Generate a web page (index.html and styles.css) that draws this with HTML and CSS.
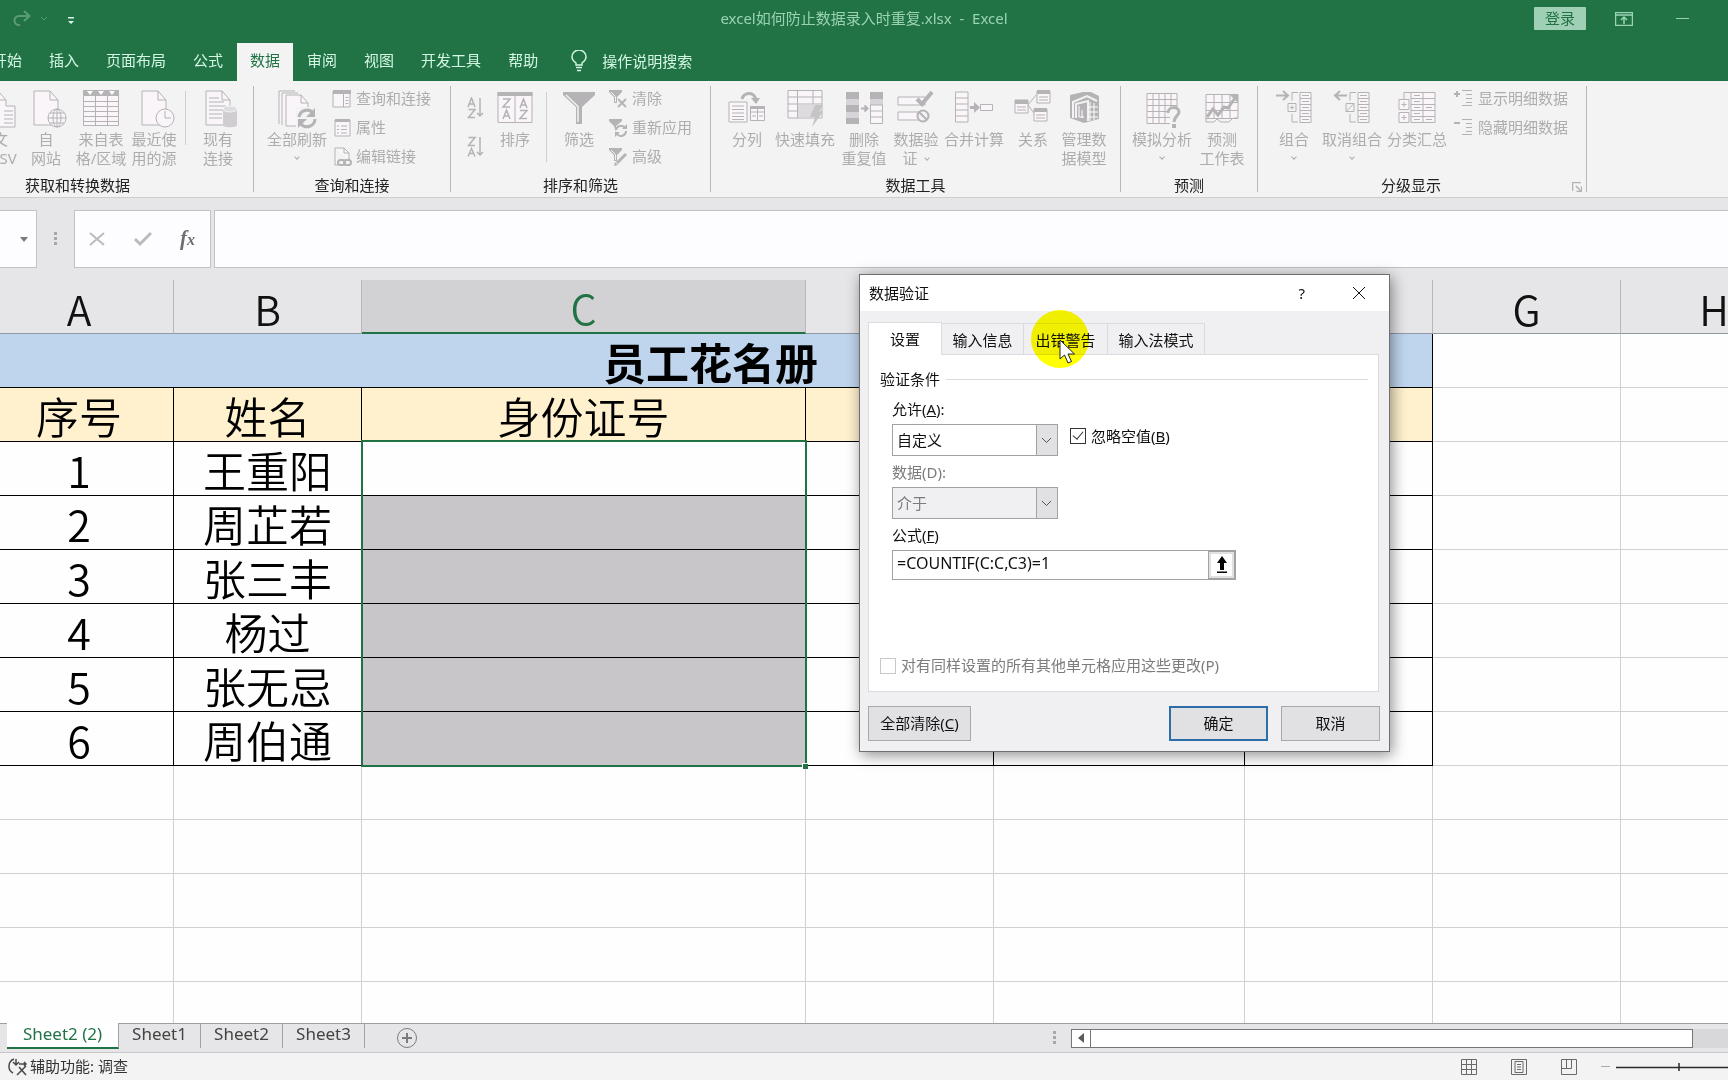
FILE: index.html
```html
<!DOCTYPE html>
<html lang="zh-CN">
<head>
<meta charset="utf-8">
<title>excel如何防止数据录入时重复.xlsx - Excel</title>
<link rel="stylesheet" href="styles.css">
</head>
<body>
<div class="app">
  <header class="titlebar">
    <div class="quick">
      <button class="icon-btn" aria-label="恢复"><svg width="20" height="18" viewBox="0 0 20 18" fill="none" stroke="#5b9c76" stroke-width="2"><path d="M17 6H7a4.500 4.500 0 0 0 0 9h1M12 1l5.500 5L12 11"/></svg></button>
      <button class="icon-btn" aria-label="恢复选项"><svg width="8" height="6" viewBox="0 0 8 6" fill="none" stroke="#5b9c76"><path d="M1 1l3 3 3-3"/></svg></button>
      <button class="icon-btn last" aria-label="自定义快速访问工具栏"><svg width="8" height="8" viewBox="0 0 8 8"><path d="M1 0h6v1.500H1zM1 4h6L4 7z" fill="#d9f5e4"/></svg></button>
    </div>
    <h1 class="doc-name">excel如何防止数据录入时重复.xlsx&nbsp; -&nbsp; Excel</h1>
    <div class="window-tools">
      <button class="login">登录</button>
      <button class="icon-btn" aria-label="功能区显示选项"><svg width="18" height="14" viewBox="0 0 18 14" fill="none" stroke="#9bd3b2"><path d="M.5.5h17v13H.5zM.5 3h17M9 12V5M6 8l3-3 3 3" stroke-width="1.500"/></svg></button>
      <button class="icon-btn" aria-label="最小化"><svg width="14" height="14" viewBox="0 0 14 14" stroke="#9bd3b2"><path d="M0 6.500h13"/></svg></button>
    </div>
  </header>

  <nav class="tabs">
    <button>开始</button><button>插入</button><button>页面布局</button><button>公式</button><button class="active">数据</button><button>审阅</button><button>视图</button><button>开发工具</button><button>帮助</button>
    <button class="tell"><svg width="16" height="22" viewBox="0 0 16 22" fill="none" stroke="#d3f7e2" stroke-width="1.500"><path d="M5 15v-2C3 11.500 1 10 1 7a7 7 0 0 1 14 0c0 3-2 4.500-4 6v2zM5 17.500h6M6 20.500h4"/></svg>操作说明搜索</button>
  </nav>

  <div class="ribbon">
    <section class="group first">
      <div class="tools">
        <button class="big w46"><svg viewBox="0 0 40 40" class="ico"><path class="p" d="M14 2h12l7 8v6h9v21H14z"/><path d="M26 2v8h7M31 21h9M31 25h9M31 29h9M31 33h9"/></svg><span>从文<br>本/CSV</span></button>
        <button class="big w60"><svg viewBox="0 0 40 40" class="ico"><path class="p" d="M8 1h16l8 9v25H8z"/><path d="M24 1v9h8"/><circle class="p" cx="31" cy="28" r="9"/><ellipse cx="31" cy="28" rx="4" ry="9"/><path d="M31 19v18M22 28h18M24 23h14M24 33h14"/></svg><span>自<br>网站</span></button>
        <button class="big w50"><svg viewBox="0 0 40 40" class="ico"><path class="p" d="M2.500 1.500h35v34h-35z"/><path d="M2 11.500h36M2 16.500h36M2 21.500h36M2 26.500h36M2 31.500h36M14.500 6v30M26.500 6v30"/><path class="f" d="M2 0h36v6H2z"/><path fill="#fff" stroke="none" d="M6 1h6l-3 4zM17 1h6l-3 4zM28 1h6l-3 4z"/></svg><span>来自表<br>格/区域</span></button>
        <button class="big w56"><svg viewBox="0 0 40 40" class="ico"><path class="p" d="M8 1h16l8 9v25H8z"/><path d="M24 1v9h8"/><circle class="p" cx="31" cy="28" r="9"/><path d="M31 21v7h6"/></svg><span>最近使<br>用的源</span></button>
        <i class="sep short"></i>
        <button class="big w58"><svg viewBox="0 0 40 40" class="ico"><path class="p" d="M8 1h16l8 9v25H8z"/><path d="M24 1v9h8M11 8h10M11 12h15M11 16h17M11 20h15M11 24h13M11 28h13"/><path d="M25 19v16c0 3 14 3 14 0V19z" fill="#cfcdd0" stroke="none"/><ellipse cx="32" cy="19" rx="7" ry="3" fill="#dedce0" stroke="#f3f3f3"/></svg><span>现有<br>连接</span></button>
      </div>
      <h2>获取和转换数据</h2>
    </section>

    <section class="group g2">
      <div class="tools">
        <button class="big w70"><svg viewBox="0 0 40 40" class="ico"><path class="p" d="M2 34V1h16M5 35V3h16M9 5h15l7 8v23H9z"/><path d="M24 5v8h7"/><path d="M19 17h22v22H19z" fill="#f3f3f3" stroke="none"/><g stroke-width="3"><path d="M22 27a8 8 0 0 1 14-4M38 29a8 8 0 0 1-14 5"/></g><path class="f" d="M38 18v9h-9zM21 38v-9h9z"/></svg><span>全部刷新</span><i class="chev"></i></button>
        <div class="list">
          <button><svg viewBox="0 0 20 20" class="sm"><path class="p" d="M1 2h17v16H1z"/><path class="f" d="M1 1h18v4H1z"/><path d="M11.500 5v13M13.500 8.500h3M13.500 11.500h3M13.500 14.500h3"/></svg>查询和连接</button>
          <button><svg viewBox="0 0 20 20" class="sm"><path class="p" d="M3 2h15v16H3z"/><path class="f" d="M3 1h15v3H3z"/><path d="M5 8h2M9 8h6M5 11.500h2M9 11.500h6M5 15h2M9 15h6"/></svg>属性</button>
          <button><svg viewBox="0 0 20 20" class="sm"><path class="p" d="M3 1h9l5 5v8M3 1v17h3"/><path d="M12 1v5h5"/><g stroke-width="2"><rect x="6" y="13" width="7" height="5" rx="2.500"/><rect x="12" y="13" width="7" height="5" rx="2.500"/></g></svg>编辑链接</button>
        </div>
      </div>
      <h2>查询和连接</h2>
    </section>

    <section class="group g3">
      <div class="tools">
        <div class="sorts">
          <button aria-label="升序"><svg viewBox="0 0 20 22" width="20" height="22" class="line"><path d="M3 10l3.500-9L10 10M4.500 7h4M3.500 12.500H10L3.500 20.500H10M15 1v18M12 16l3 3 3-3"/></svg></button>
          <button aria-label="降序"><svg viewBox="0 0 20 22" width="20" height="22" class="line"><path d="M3.500 1.500H10l-6.500 8H10M3 20.500l3.500-8 3.500 8M4.500 17.500h4M15 1v18M12 16l3 3 3-3"/></svg></button>
        </div>
        <button class="big w56"><svg viewBox="0 0 40 40" class="ico"><path class="p" d="M3 3h34v29.500H3zM20 6v26"/><path class="f" d="M2.500 2h35v4h-35z"/><path stroke-width="1.500" d="M8 9h7l-7 8h7M8 29l3.500-9 3.500 9M9.500 26h4M25 18l3.500-9 3.500 9M26.500 15h4M25 20.500h7l-7 8h7"/></svg><span>排序</span></button>
        <i class="sep"></i>
        <button class="big w58"><svg viewBox="0 0 40 40" class="ico"><path class="f" d="M4 2h32v3L23 17v17h-6V17L4 5z"/><path stroke="#f3f3f3" stroke-width="1.500" d="M7 5l12 11.500V32"/></svg><span>筛选</span></button>
        <div class="list">
          <button><svg viewBox="0 0 20 20" class="sm"><path class="f" d="M1 1h13v2L9 8v6H6V8L1 3z"/><path stroke="#f3f3f3" d="M3 3l4.500 4.500V13"/><path stroke-width="2" d="M10 10l8 8M18 10l-8 8"/></svg>清除</button>
          <button><svg viewBox="0 0 20 20" class="sm"><path class="f" d="M1 1h13v2L8 8v6L6 8 1 3z"/><path stroke-width="2" d="M8 12a5 5 0 0 1 9-2M18 13a5 5 0 0 1-9 3"/><path class="f" d="M19 6v5h-5zM7 19v-5h5z"/></svg>重新应用</button>
          <button><svg viewBox="0 0 20 20" class="sm"><path class="f" d="M1 1h13v2L9 8v6H6V8L1 3z"/><path stroke="#f3f3f3" d="M3 3l4.500 4.500V13"/><path stroke-width="3" d="M18 7l-9 9"/><path class="f" d="M6 19l1-4 3 3z"/></svg>高级</button>
        </div>
      </div>
      <h2>排序和筛选</h2>
    </section>

    <section class="group g4">
      <div class="tools">
        <button class="big w56"><svg viewBox="0 0 40 40" class="ico"><path class="p" d="M2 12h18v20H2zM23.500 17h14v13.500h-14z"/><path d="M5 16h12M5 19.500h12M5 23h12M5 26.500h12M5 29.500h12M30.500 18v12M23 22h14M25 26h4M32 26h4"/><path class="f" d="M23 16h15v3H23z"/><path stroke-width="3" d="M15 9c2-7 12-8 14 1"/><path class="f" d="M24 8h9l-4 6z"/></svg><span>分列</span></button>
        <button class="big w60"><svg viewBox="0 0 40 40" class="ico"><path class="p" d="M3 .5h34v27.500H3z"/><path d="M3 7h34M3 14h34M3 21h34M12.500 0v28M28 0v14"/><path fill="#dddbde" stroke="none" d="M13 15h17v12H13z"/><path fill="#c6c4c7" stroke="none" d="M30 15h8l-4 7h4L27 37l3-10h-5z"/></svg><span>快速填充</span></button>
        <button class="big w58"><svg viewBox="0 0 40 40" class="ico"><path class="p" d="M26.500 3h12v30.500h-12z"/><path class="f" d="M2 2h13v32H2zM26 2h13v7H26z"/><path stroke="none" fill="#d6d4d8" d="M2 9h13v6H2zM2 22h13v6H2zM26 9h13v6H26z"/><path d="M26 15h13M26 21h13M26 27h13"/><path d="M17 18.500h6M20.500 15.500l3 3-3 3" stroke-width="2"/></svg><span>删除<br>重复值</span></button>
        <button class="big w46"><svg viewBox="0 0 40 40" class="ico"><path class="p" d="M2 7h27v8H2zM2 22h27v8H2z"/><path stroke-width="4" d="M21 9l5 5L36 2"/><circle cx="27" cy="26" r="5.500" fill="#f3f3f3" stroke-width="2"/><path stroke-width="2" d="M23 22l8 8"/></svg><span>数据验<br>证 <i class="chev in"></i></span></button>
        <button class="big w70"><svg viewBox="0 0 40 40" class="ico"><path class="p" d="M1.500 2h12.500v30H1.500zM26.500 14.500h12v6h-12z"/><path d="M1 8h13M1 14h13M1 20h13M1 26h13"/><path stroke-width="3" d="M16 17.500h6"/><path class="f" d="M20 12l6 5.500-6 5.500z"/></svg><span>合并计算</span></button>
        <button class="big w48"><svg viewBox="0 0 40 40" class="ico"><path d="M15 15l8-10M15 15l8 11"/><path class="p" d="M2 10h13v13H2zM24 1h13v12H24zM21 19h13v12H21z"/><path class="f" d="M2 10h13v4H2zM24 0h13v4H24zM21 18h13v4H21z"/><path d="M4 17h9M4 20h9M26 7h9M26 10h9M23 25h9M23 28h9"/></svg><span>关系</span></button>
        <button class="big w54"><svg viewBox="0 0 40 40" class="ico"><path class="f" d="M6 5l13-3h8l8 4v23l-15 4-14-5z"/><path stroke="#f3f3f3" fill="none" stroke-width="2" d="M9 28V12l14-6 10 5M12 28V14l12-3v20"/><path stroke="#fff" d="M26 12v19M30 13v17M24 17h10M24 22h10M24 27h10M15 16v11M18 20v8M15 27h5"/></svg><span>管理数<br>据模型</span></button>
      </div>
      <h2>数据工具</h2>
    </section>

    <section class="group g5">
      <div class="tools">
        <button class="big w66"><svg viewBox="0 0 40 40" class="ico"><path class="p" d="M5 3.500h30v30H5z"/><path d="M11 3v31M17 3v31M23 3v31M29 3v31M5 9.500h30M5 15.500h30M5 21.500h30M5 27.500h30"/><path d="M25 17h14v21H28V27h-3z" fill="#f3f3f3" stroke="none"/><path stroke-width="3" d="M26 23c0-7 11-7 11-1 0 4-5 4-5 10"/><path class="f" d="M30 34h4v4h-4z"/></svg><span>模拟分析</span><i class="chev"></i></button>
        <button class="big w54"><svg viewBox="0 0 40 40" class="ico"><path class="p" d="M4 4.500h32v24H4z"/><path d="M12 4v24M20 4v24M28 4v24M4 12.500h32M4 20.500h32M4 28v4h8l3-3 4 3h8l3-3M36 28h-4"/><path stroke-width="3" d="M5 27l6-8 5 6 6-8 4 1 7-10"/><path class="f" d="M28 5h8v8z"/></svg><span>预测<br>工作表</span></button>
      </div>
      <h2>预测</h2>
    </section>

    <section class="group g6">
      <div class="tools">
        <button class="big w56"><svg viewBox="0 0 40 40" class="ico"><path class="p" d="M26 2.500h11v30H26z"/><path d="M26 8.500h11M26 14.500h11M26 20.500h11M26 26.500h11M28 5.500h7M28 11.500h7M28 17.500h7M28 23.500h7M28 29.500h7M24 2.500h-6v8M18 24v8h6M14 13.500h8v8h-8zM16 17.500h4M18 15.500v4"/><path stroke-width="2" d="M2 5.500h12M9 1l5 4.500L9 10"/></svg><span>组合</span><i class="chev"></i></button>
        <button class="big w60"><svg viewBox="0 0 40 40" class="ico"><path class="p" d="M26 2.500h11v30H26z"/><path d="M26 8.500h11M26 14.500h11M26 20.500h11M26 26.500h11M28 5.500h7M28 11.500h7M28 17.500h7M28 23.500h7M28 29.500h7M24 2.500h-6v8M18 24v8h6M14 13.500h8v8h-8zM14 21.500l8-8"/><path stroke-width="2" d="M3 5.500h12M8 1L3 5.500 8 10"/></svg><span>取消组合</span><i class="chev"></i></button>
        <button class="big w70"><svg viewBox="0 0 40 40" class="ico"><path class="p" d="M14 2.500h24v30H14z"/><path d="M14 8.500h24M14 14.500h24M14 20.500h24M14 26.500h24M26 2v31M17 5.500h6M17 11.500h6M17 17.500h6M17 23.500h6M17 29.500h6M29 17.500h6M29 29.500h6M7 9V2.500h7"/><path class="p" d="M2 9.500h10v10H2zM2 22.500h10v10H2z"/><path d="M7 12v5M4.500 14.500h5M7 25v5M4.500 27.500h5"/></svg><span>分类汇总</span></button>
        <div class="list">
          <button><svg viewBox="0 0 20 20" class="sm"><path d="M8 1.500h10M12 5.500h6M12 9.500h6M12 13.500h6M8 16.500h10"/><path stroke-width="2" d="M0 5h6M3 2v6"/></svg>显示明细数据</button>
          <button><svg viewBox="0 0 20 20" class="sm"><path d="M8 1.500h10M12 5.500h6M12 9.500h6M12 13.500h6M8 16.500h10"/><path stroke-width="2" d="M0 5h6"/></svg>隐藏明细数据</button>
        </div>
      </div>
      <h2>分级显示</h2>
      <button class="launcher" aria-label="分级显示设置"><svg width="10" height="10" viewBox="0 0 10 10" class="line"><path d="M.5 9V.5H9M4 4l5 5M9.500 4.500v5h-5"/></svg></button>
    </section>
  </div>

  <div class="formula-bar">
    <button class="name-box" aria-label="名称框"><svg width="8" height="5" viewBox="0 0 8 5"><path d="M0 0h8L4 5z" fill="#7a787a"/></svg></button>
    <svg class="dots" width="4" height="14" viewBox="0 0 4 14" fill="#a8a6a8"><path d="M0 0h3v3H0zM0 5h3v3H0zM0 10h3v3H0z"/></svg>
    <div class="fx-tools">
      <button aria-label="取消"><svg width="16" height="16" viewBox="0 0 16 16" fill="none" stroke="#bcbabc" stroke-width="2"><path d="M1 2l14 12M15 2L1 14"/></svg></button>
      <button aria-label="输入"><svg width="18" height="16" viewBox="0 0 18 16" fill="none" stroke="#bcbabc" stroke-width="3"><path d="M1 8l5 5L17 2"/></svg></button>
      <button class="fx" aria-label="插入函数">f<small>x</small></button>
    </div>
    <input class="formula" aria-label="编辑栏">
  </div>

  <main class="sheet">
    <table>
      <colgroup><col class="ca"><col class="cn"><col class="cc"><col class="cn"><col class="ce"><col class="cn"><col class="cn"><col></colgroup>
      <thead><tr><th class="a">A</th><th>B</th><th class="on">C</th><th></th><th></th><th></th><th>G</th><th>H</th></tr></thead>
      <tbody>
        <tr class="d title"><td colspan="6" class="a">员工花名册</td><td></td><td></td></tr>
        <tr class="d head"><td class="a">序号</td><td>姓名</td><td>身份证号</td><td></td><td></td><td></td><td></td><td></td></tr>
        <tr class="d"><td class="a">1</td><td>王重阳</td><td class="cell-active"></td><td></td><td></td><td></td><td></td><td></td></tr>
        <tr class="d"><td class="a">2</td><td>周芷若</td><td class="sel"></td><td></td><td></td><td></td><td></td><td></td></tr>
        <tr class="d"><td class="a">3</td><td>张三丰</td><td class="sel"></td><td></td><td></td><td></td><td></td><td></td></tr>
        <tr class="d"><td class="a">4</td><td>杨过</td><td class="sel"></td><td></td><td></td><td></td><td></td><td></td></tr>
        <tr class="d"><td class="a">5</td><td>张无忌</td><td class="sel"></td><td></td><td></td><td></td><td></td><td></td></tr>
        <tr class="d"><td class="a">6</td><td>周伯通</td><td class="sel"></td><td></td><td></td><td></td><td></td><td></td></tr>
        <tr><td></td><td></td><td></td><td></td><td></td><td></td><td></td><td></td></tr>
        <tr><td></td><td></td><td></td><td></td><td></td><td></td><td></td><td></td></tr>
        <tr><td></td><td></td><td></td><td></td><td></td><td></td><td></td><td></td></tr>
        <tr><td></td><td></td><td></td><td></td><td></td><td></td><td></td><td></td></tr>
        <tr><td></td><td></td><td></td><td></td><td></td><td></td><td></td><td></td></tr>
      </tbody>
    </table>
  </main>

  <div class="sheet-bar">
    <div class="sheet-tabs">
      <button class="active">Sheet2 (2)</button><button>Sheet1</button><button>Sheet2</button><button>Sheet3</button>
      <button class="add" aria-label="新工作表"><svg width="22" height="22" viewBox="0 0 22 22" fill="none" stroke="#7c7a7c"><circle cx="11" cy="11" r="9.500"/><path stroke-width="2" d="M11 6v10M6 11h10"/></svg></button>
    </div>
    <div class="scroll">
      <svg class="dots" width="4" height="14" viewBox="0 0 4 14" fill="#a8a6a8"><path d="M0 0h3v3H0zM0 5h3v3H0zM0 10h3v3H0z"/></svg>
      <button class="arrow" aria-label="向左滚动"><svg width="6" height="10" viewBox="0 0 6 10"><path d="M6 0v10L0 5z" fill="#5c5a5c"/></svg></button>
      <div class="thumb"></div>
      <div class="rest"></div>
    </div>
  </div>

  <footer class="status">
    <button class="access"><svg width="20" height="18" viewBox="0 0 20 18" fill="none" stroke="#4b494b" stroke-width="1.500"><path d="M6 1C0 3-1 12 5 15M8 1v5M5 4l3 3 3-3M11 6h7M16 4l2 2-2 2M11 9l7 8M18 8l-9 9"/></svg>辅助功能: 调查</button>
    <div class="views">
      <button aria-label="普通"><svg width="16" height="16" viewBox="0 0 16 16" fill="none" stroke="#6b696b"><path d="M.5.5h15v15H.5zM5.500 0v16M10.500 0v16M0 5.500h16M0 10.500h16"/></svg></button>
      <button aria-label="页面布局"><svg width="16" height="16" viewBox="0 0 16 16" fill="none" stroke="#6b696b"><path d="M.5.5h15v15H.5zM4 2.500h8v11H4zM6 5.500h4M6 8h4M6 10.500h4"/></svg></button>
      <button aria-label="分页预览"><svg width="16" height="16" viewBox="0 0 16 16" fill="none" stroke="#6b696b"><path d="M.5.5h15v15H.5zM5.500 0v9.500M10.500 0v9.500H0"/></svg></button>
      <svg class="zoomer" width="127" height="16" viewBox="0 0 127 16" fill="none"><path d="M0 7.500h9" stroke="#aaa8aa"/><path d="M15 8.500h113M78 4v8" stroke="#2b292b" stroke-width="1.500"/></svg>
    </div>
  </footer>

  <div class="dialog" role="dialog" aria-label="数据验证">
    <div class="dlg-title"><span>数据验证</span>
      <button aria-label="帮助">?</button>
      <button aria-label="关闭"><svg width="14" height="14" viewBox="0 0 14 14" stroke="#111"><path d="M1 1l12 12M13 1L1 13"/></svg></button>
    </div>
    <div class="dlg-body">
      <div class="dlg-tabs">
        <button class="active">设置</button><button class="t82">输入信息</button><button class="t84">出错警告</button><button class="t97">输入法模式</button>
      </div>
      <div class="panel">
        <div class="legend">验证条件</div>
        <div class="fields">
          <label for="allow">允许(<u>A</u>):</label>
          <div class="line-row">
            <div class="combo"><select id="allow"><option>自定义</option></select><svg width="11" height="7" viewBox="0 0 11 7" fill="none" stroke="#555"><path d="M1 1l4.500 4.500L10 1"/></svg></div>
            <label class="check"><input type="checkbox" checked><span>忽略空值(<u>B</u>)</span></label>
          </div>
          <label for="data" class="off">数据(D):</label>
          <div class="combo off"><select id="data" disabled><option>介于</option></select><svg width="11" height="7" viewBox="0 0 11 7" fill="none" stroke="#555"><path d="M1 1l4.500 4.500L10 1"/></svg></div>
          <label for="formula">公式(<u>F</u>)</label>
          <div class="ref"><input id="formula" value="=COUNTIF(C:C,C3)=1"><button aria-label="折叠对话框"><svg width="12" height="18" viewBox="0 0 12 18"><path d="M6 0l5 7H8v7H4V7H1zM1 15.500h10V17H1z"/></svg></button></div>
        </div>
        <label class="check off"><input type="checkbox" disabled><span>对有同样设置的所有其他单元格应用这些更改(P)</span></label>
      </div>
      <div class="actions">
        <button class="clear">全部清除(<u>C</u>)</button>
        <button class="ok">确定</button>
        <button>取消</button>
      </div>
    </div>
    <div class="halo"></div>
    <svg class="pointer" width="17" height="26" viewBox="0 0 17 26"><path d="M1 1v19l4.500-4 3.500 8 3.500-1.500L9 15h6.500z" fill="#fff" stroke="#222"/></svg>
  </div>
</div>
</body>
</html>
```
FILE: styles.css
```css
*, *::before, *::after { box-sizing: border-box; }
body {
  margin: 0;
  font: 15px/19px "Noto Sans", "Noto Sans CJK SC", sans-serif;
  color: #111;
}
button {
  font: inherit;
  color: inherit;
  background: none;
  border: 0;
  padding: 0;
  white-space: nowrap;
}
h1, h2 { margin: 0; font-size: 15px; font-weight: 400; }
svg { display: block; flex: none; }

.app {
  position: relative;
  display: flex;
  flex-direction: column;
  height: 100vh;
  overflow: hidden;
  background: #e6e6e8;
}

/* Title bar */
.titlebar {
  display: grid;
  grid-template-columns: 1fr auto 1fr;
  align-items: center;
  height: 43px;
  padding-bottom: 6px;
  background: #217346;
}
.quick { display: flex; align-items: center; gap: 8px; padding-left: 12px; }
.quick .last { margin: 4px 0 0 11px; }
.doc-name { color: #9bd3b2; }
.window-tools { display: flex; justify-content: flex-end; align-items: center; gap: 29px; padding-right: 38px; }
.window-tools .icon-btn:last-child { margin-left: 14px; }
.login { width: 52px; height: 23px; background: #9fcfb4; color: #217346; border-radius: 1px; }

/* Ribbon tabs */
.tabs {
  display: flex;
  gap: 1px;
  height: 38px;
  background: #217346;
  color: #d3f7e2;
  overflow: hidden;
}
.tabs button { padding: 0 13px 4px; }
.tabs button:first-child { margin-left: -21px; }
.tabs .active { background: #f3f3f3; color: #217346; }
.tabs .tell { display: flex; align-items: center; gap: 15px; padding: 0 13px 2px 19px; }

/* Ribbon */
.ribbon {
  display: flex;
  height: 117px;
  padding: 5px 0;
  background: #f3f3f3;
  border-bottom: 1px solid #cfcdd0;
  color: #aeacae;
  overflow: hidden;
}
.group {
  position: relative;
  flex: none;
  display: flex;
  flex-direction: column;
  height: 106px;
  border-right: 1px solid #b9b7b9;
}
.group h2 { text-align: center; line-height: 14px; color: #222; }
.tools { display: flex; height: 92px; padding-left: 8px; }
.first { width: 352px; margin-left: -98px; }
.first .tools { justify-content: flex-end; padding: 0 6px 0 0; }
.g2 { width: 197px; }
.g3 { width: 260px; }
.g3 .tools { padding-left: 14px; }
.g4 { width: 410px; }
.g5 { width: 137px; }
.g6 { width: 329px; }
.g6 h2 { padding-right: 22px; }
.g6 .list { margin-left: 2px; }
.big { flex: none; display: flex; flex-direction: column; align-items: center; padding-top: 4px; }
.big span { display: block; text-align: center; margin: 0 -8px; }
.w46 { width: 46px; }
.w48 { width: 48px; }
.w50 { width: 50px; }
.w54 { width: 54px; }
.w56 { width: 56px; }
.w58 { width: 58px; }
.w60 { width: 60px; }
.w66 { width: 66px; }
.w70 { width: 70px; }
.ico { width: 40px; height: 40px; overflow: visible; fill: none; stroke: #b5b3b5; }
.sm { width: 20px; height: 20px; fill: none; stroke: #b5b3b5; }
.line { fill: none; stroke: #b5b3b5; stroke-width: 1.5; }
.p { fill: #f9f5f9; }
.f { fill: #b5b3b5; stroke: none; }
.sep { flex: none; width: 1px; height: 70px; margin: 6px 3px 0; background: #d0ced0; }
.sep.short { height: 54px; margin-top: 5px; }
.chev {
  width: 4px;
  height: 4px;
  margin-top: 6px;
  border: solid #aeacae;
  border-width: 0 1px 1px 0;
  transform: rotate(45deg);
}
.chev.in { display: inline-block; margin: 0 0 4px 4px; }
.list { margin-top: -2px; }
.list button { display: flex; align-items: center; gap: 4px; height: 29px; }
.sorts { display: flex; flex-direction: column; gap: 17px; width: 22px; padding-top: 11px; }
.launcher { position: absolute; right: 4px; bottom: 0; }

/* Formula bar */
.formula-bar { display: flex; align-items: center; height: 58px; margin: 12px 0; }
.name-box, .fx-tools, .formula { height: 58px; background: #fdfcfe; border: 1px solid #c3c1c3; }
.name-box { display: flex; justify-content: flex-end; align-items: center; width: 37px; padding-right: 8px; border-left: 0; }
.formula-bar .dots { margin: 0 15px 0 17px; }
.fx-tools { display: flex; align-items: center; justify-content: space-between; width: 137px; padding: 0 15px 0 14px; margin: 0 3px 0 1px; }
.formula { flex: 1; min-width: 0; border-right: 0; padding: 0 8px; }
.fx { font: italic bold 21px/24px "Liberation Serif", serif; color: #6f6d6f; }
.fx small { font-size: 16px; }

/* Grid */
.sheet { flex: 1; min-height: 0; overflow: hidden; }
table { table-layout: fixed; width: max(100%, 1808px); border-spacing: 0; background: #fefefe; font-family: "Noto Sans CJK SC", sans-serif; }
.ca { width: 174px; }
.cn { width: 188px; }
.cc { width: 444px; }
.ce { width: 251px; }
th, td { height: 54px; padding: 0; text-align: center; line-height: 50px; border: solid #d2d0d3; border-width: 0 1px 1px 0; }
th { padding-top: 2px; font-size: 41px; font-weight: 350; background: #e6e6e8; border-right-color: #b9b7b9; border-bottom-color: #8f9aa5; }
th.on { color: #217346; background: #d2d2d4; border-bottom: 2px solid #217346; }
td { font-size: 43px; font-weight: 350; color: #000; }
.a { padding-right: 15px; }
.title .a { padding-right: 11px; }
.d td:nth-child(-n+6) { border-color: #000; }
.d.title td:nth-child(n+2) { border-color: #d2d0d3; }
.title td:first-child { background: #bfd5ee; font-weight: 700; }
.head td:nth-child(-n+6) { background: #fff1cd; }
.sel { background: #c8c6c9; }
.cell-active { position: relative; }
.cell-active::before {
  content: "";
  position: absolute;
  z-index: 1;
  top: -2px;
  left: -1px;
  right: -2px;
  height: 327px;
  border: 2px solid #217346;
}
.cell-active::after {
  content: "";
  position: absolute;
  z-index: 1;
  top: 321px;
  right: -3px;
  width: 6px;
  height: 6px;
  background: #217346;
  border: solid #fff;
  border-width: 1px 0 0 1px;
}

/* Sheet tabs and horizontal scroll bar */
.sheet-bar { display: flex; justify-content: space-between; height: 30px; border-top: 1px solid #a09ea0; border-bottom: 1px solid #c9c7c9; }
.sheet-tabs { display: flex; align-items: flex-start; padding-left: 7px; font-size: 17px; line-height: 20px; color: #444; }
.sheet-tabs button { width: 82px; height: 24px; padding-bottom: 4px; border-right: 1px solid #a3a1a3; }
.sheet-tabs .active { width: 112px; height: 26px; margin-top: -1px; padding-bottom: 2px; background: #fff; color: #217346; border-bottom: 2px solid #217346; }
.sheet-tabs .add { display: flex; align-items: center; width: auto; height: 28px; padding: 0; margin-left: 31px; border: 0; }
.scroll { display: flex; align-items: center; width: 675px; }
.scroll .dots { margin-right: 14px; }
.arrow { display: flex; align-items: center; justify-content: center; width: 20px; height: 19px; background: #fff; border: 1px solid #777577; }
.thumb { flex: 1; height: 19px; background: #fff; border: 1px solid #777577; border-left: 0; }
.rest { width: 35px; height: 19px; background: #d8d8da; }

/* Status bar */
.status { display: flex; justify-content: space-between; align-items: center; height: 27px; background: #f3f3f3; color: #333; }
.access { display: flex; align-items: center; gap: 2px; padding-left: 8px; }
.views { display: flex; align-items: center; gap: 34px; }
.zoomer { margin-left: -10px; }

/* Data validation window */
.dialog {
  position: absolute;
  left: 859px;
  top: 274px;
  width: 531px;
  background: #f0eff2;
  border: 1px solid #706e70;
  box-shadow: 2px 3px 14px rgba(0, 0, 0, .45);
}
.dlg-title { display: flex; align-items: center; height: 36px; padding: 0 23px 0 9px; background: #fff; }
.dlg-title span { flex: 1; }
.dlg-title button + button { margin-left: 47px; }
.dlg-body { padding: 10px 9px 10px 8px; }
.dlg-tabs { display: flex; align-items: flex-end; height: 33px; }
.dlg-tabs button { height: 31px; padding-top: 2px; border: solid #dcdade; border-width: 1px 1px 0 0; }
.dlg-tabs .active { z-index: 1; width: 74px; height: 33px; margin-bottom: -1px; padding-top: 0; background: #fff; border-left-width: 1px; }
.t82 { width: 82px; }
.t84 { width: 84px; }
.t97 { width: 97px; }
.panel { height: 338px; margin-right: 1px; padding: 14px 10px 0 11px; background: #fff; border: 1px solid #dcdade; display: flex; flex-direction: column; }
.legend { display: flex; align-items: center; gap: 6px; line-height: 20px; }
.legend::after { content: ""; flex: 1; height: 1px; background: #dcdade; }
.fields { display: flex; flex-direction: column; flex: 1; padding: 10px 0 0 12px; }
.fields > label { line-height: 20px; margin-bottom: 5px; }
.fields > * + label { margin-top: 6px; }
.line-row { display: flex; gap: 12px; }
.combo { position: relative; width: 166px; height: 32px; }
select {
  appearance: none;
  width: 100%;
  height: 32px;
  padding: 0 4px;
  font: inherit;
  color: inherit;
  opacity: 1;
  border: 1px solid #a3a1a3;
  border-radius: 0;
  background: linear-gradient(90deg, transparent calc(100% - 21px), #a3a1a3 calc(100% - 21px), #a3a1a3 calc(100% - 20px), #e1e0e3 calc(100% - 20px)) #fff;
}
.combo svg { position: absolute; right: 6px; top: 13px; }
.combo.off select { background-color: #f0eff2; }
.off { color: #7d7b7d; }
.check { display: flex; align-items: center; gap: 5px; }
.line-row .check { height: 24px; }
.panel > .check { padding-bottom: 16px; }
.check input { appearance: none; width: 16px; height: 16px; margin: 0; border: 1px solid #333; background: #fff; }
.check input:checked::after { content: ""; display: block; width: 6px; height: 10px; margin: 0 0 0 4px; border: solid #333; border-width: 0 1px 1px 0; transform: rotate(40deg); }
.check input:disabled { border-color: #c9c7c9; }
.ref { display: flex; width: 344px; height: 30px; }
.ref input { flex: 1; min-width: 0; padding: 0 0 3px 4px; font: inherit; font-size: 16px; color: inherit; border: 1px solid #a3a1a3; }
.ref button { display: flex; align-items: center; justify-content: center; width: 27px; background: #fff; border: 2px solid #a3a1a3; box-shadow: inset 0 0 0 2px #e1e0e3; border-left: 0; }
.actions { display: flex; gap: 13px; margin-top: 14px; }
.actions button { width: 99px; height: 35px; background: #e1e0e3; border: 1px solid #a9a7a9; }
.actions .clear { width: 103px; margin-right: auto; }
.actions .ok { border: 2px solid #2b6ea8; }
.halo { position: absolute; left: 171px; top: 35px; width: 58px; height: 58px; border-radius: 50%; background: #ff0; mix-blend-mode: multiply; z-index: 2; }
.pointer { position: absolute; left: 199px; top: 64px; z-index: 3; }
```
